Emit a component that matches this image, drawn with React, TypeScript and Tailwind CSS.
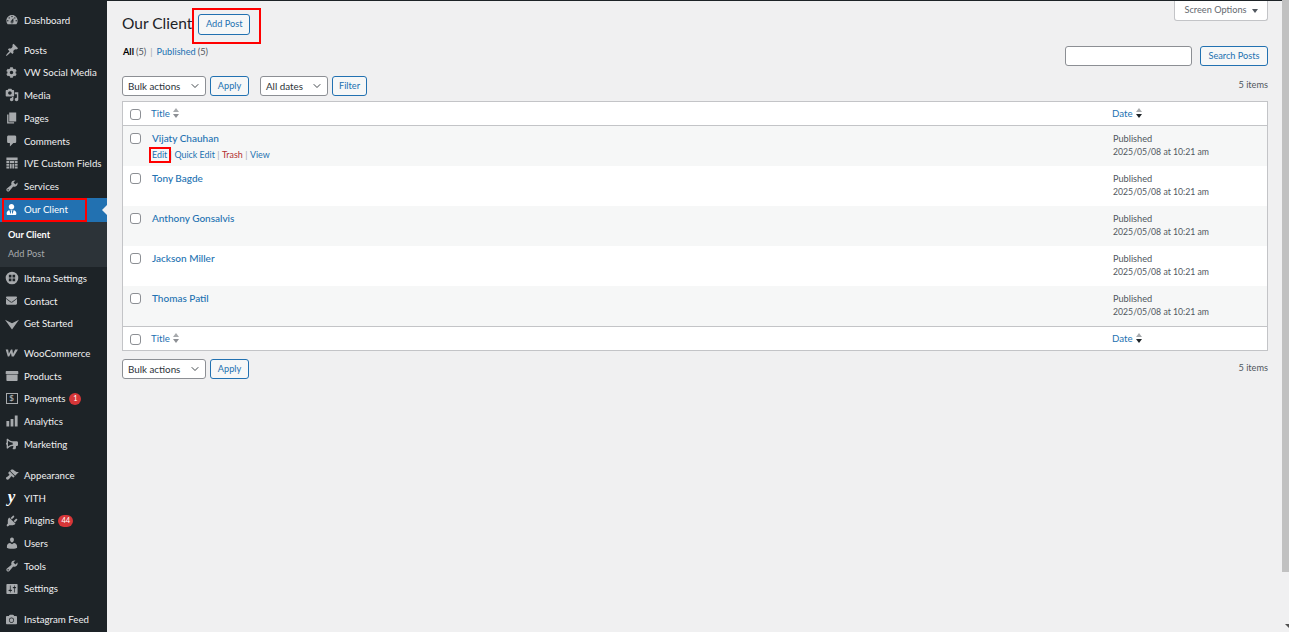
import React from "react";
import { ChevronDown } from "lucide-react";
import { FaCog, FaEnvelope, FaCamera, FaUserTie, FaBullhorn } from "react-icons/fa";

const font = "font-['Lato','Liberation_Sans',sans-serif]";

function D({ d, color = "#a7aaad", size = 14 }: { d: string; color?: string; size?: number }) {
  return (
    <svg width={size} height={size} viewBox="0 0 20 20" fill={color}>
      <path d={d} />
    </svg>
  );
}

const P = {
  dash: "M3.76 16h12.48c1.1-1.37 1.76-3.11 1.76-5 0-4.42-3.58-8-8-8s-8 3.58-8 8c0 1.89.66 3.63 1.76 5zM10 4c.55 0 1 .45 1 1s-.45 1-1 1-1-.45-1-1 .45-1 1-1zM6 6c.55 0 1 .45 1 1s-.45 1-1 1-1-.45-1-1 .45-1 1-1zm8 0c.55 0 1 .45 1 1s-.45 1-1 1-1-.45-1-1 .45-1 1-1zm-5.37 5.55L12 7v6c0 1.1-.9 2-2 2s-2-.9-2-2c0-.57.24-1.08.63-1.45zM4 10c.55 0 1 .45 1 1s-.45 1-1 1-1-.45-1-1 .45-1 1-1zm12 0c.55 0 1 .45 1 1s-.45 1-1 1-1-.45-1-1 .45-1 1-1zm-5 3c0-.55-.45-1-1-1s-1 .45-1 1 .45 1 1 1 1-.45 1-1z",
  pin: "M10.44 3.02l1.82-1.82 6.36 6.35-1.83 1.82c-1.05-.68-2.48-.57-3.41.36l-.75.75c-.92.93-1.04 2.35-.35 3.41l-1.83 1.82-2.41-2.41-2.8 2.79c-.42.42-3.38 2.71-3.8 2.29s1.86-3.39 2.28-3.81l2.79-2.79L4.1 9.36l1.83-1.82c1.05.69 2.48.57 3.4-.36l.75-.75c.93-.92 1.05-2.35.36-3.41z",
  media: "M13 11V4c0-.55-.45-1-1-1h-1.67L9 1H5L3.67 3H2c-.55 0-1 .45-1 1v7c0 .55.45 1 1 1h10c.55 0 1-.45 1-1zM7 4.5c1.38 0 2.5 1.12 2.5 2.5S8.38 9.5 7 9.5 4.5 8.38 4.5 7 5.62 4.5 7 4.5zM14 6h5v10.5c0 1.38-1.12 2.5-2.5 2.5S14 17.88 14 16.5s1.12-2.5 2.5-2.5c.17 0 .34.02.5.05V9h-3V6zm-4 8.05V13h2v3.5c0 1.38-1.12 2.5-2.5 2.5S7 17.88 7 16.5 8.12 14 9.5 14c.17 0 .34.02.5.05z",
  pages: "M6 15V2h10v13H6zm-1 1h8v2H3V5h2v11z",
  comment: "M5 2h9c1.1 0 2 .9 2 2v7c0 1.1-.9 2-2 2h-2l-5 5v-5H5c-1.1 0-2-.9-2-2V4c0-1.1.9-2 2-2z",
  wrench: "M16.68 9.77c-1.34 1.34-3.3 1.67-4.95.99l-5.41 6.52c-.99.99-2.59.99-3.58 0s-.99-2.59 0-3.57l6.52-5.42c-.68-1.65-.35-3.61.99-4.95 1.28-1.28 3.12-1.62 4.72-1.06l-2.89 2.89 2.82 2.82 2.86-2.87c.53 1.58.18 3.39-1.08 4.65zM3.81 16.21c.4.39 1.04.39 1.43 0 .4-.4.4-1.04 0-1.43-.39-.4-1.03-.4-1.43 0-.39.39-.39 1.03 0 1.43z",
  user: "M10 9.25c-2.27 0-2.73-3.44-2.73-3.44C7 4.02 7.82 2 9.97 2c2.16 0 2.98 2.02 2.71 3.81 0 0-.41 3.44-2.68 3.44zm0 2.57L12.72 10c2.39 0 4.52 2.33 4.52 4.53v2.49s-3.65 1.13-7.24 1.13c-3.65 0-7.24-1.13-7.24-1.13v-2.49c0-2.25 1.94-4.48 4.47-4.48z",
  brush: "M14.48 11.06L7.41 3.99l1.5-1.5c.5-.56 2.3-.47 3.51.32 1.21.8 1.43 1.28 2.91 2.1 1.18.64 2.45 1.26 4.45.85zm-.71.71L6.7 4.7 4.93 6.47c-.39.39-.39 1.02 0 1.41l1.06 1.06c.39.39.39 1.03 0 1.42-.6.6-1.43 1.11-2.21 1.69-.35.26-.7.53-1.01.84C1.43 13.23.91 14.8 2.09 15.98c1.17 1.18 2.75.65 4.08-.68.31-.31.58-.66.84-1.01.58-.78 1.09-1.61 1.69-2.21.39-.39 1.02-.39 1.41 0l1.06 1.06c.39.39 1.02.39 1.41 0z",
  plug: "M13.11 4.36L9.87 7.6 8 5.73l3.24-3.24c.35-.34 1.05-.2 1.56.32.52.51.66 1.21.31 1.55zm-8 1.77l.91-1.12 9.01 9.01-1.19.84c-.71.71-2.63 1.16-3.82 1.16H6.14L4.9 17.26c-.59.59-1.54.59-2.12 0-.59-.58-.59-1.53 0-2.12l1.24-1.24v-3.88c0-1.13.4-3.19 1.09-3.89zm7.26 3.97l3.24-3.24c.34-.35 1.04-.21 1.55.31.52.51.66 1.21.31 1.55l-3.24 3.25z",
  settings: "M18 16V4c0-.55-.45-1-1-1H3c-.55 0-1 .45-1 1v12c0 .55.45 1 1 1h14c.55 0 1-.45 1-1zM8 11h1c.55 0 1 .45 1 1s-.45 1-1 1H8v1.5c0 .28-.22.5-.5.5s-.5-.22-.5-.5V13H6c-.55 0-1-.45-1-1s.45-1 1-1h1V5.5c0-.28.22-.5.5-.5s.5.22.5.5V11zm5-2h-1c-.55 0-1-.45-1-1s.45-1 1-1h1V5.5c0-.28.22-.5.5-.5s.5.22.5.5V7h1c.55 0 1 .45 1 1s-.45 1-1 1h-1v5.5c0 .28-.22.5-.5.5s-.5-.22-.5-.5V9z",
  archive: "M19 4v3H1V4c0-.55.45-1 1-1h16c.55 0 1 .45 1 1zM2 8h16v8c0 .55-.45 1-1 1H3c-.55 0-1-.45-1-1V8z",
  chart: "M18 18V2h-4v16h4zm-6 0V7H8v11h4zm-6 0v-8H2v8h4z",
  table: "M2 2h16v4H2zM2 7h4v3H2zM7 7h6v3H7zM14 7h4v3h-4zM2 11h4v3H2zM7 11h2.5v7H7zM10.5 11H13v7h-2.5zM14 11h4v3h-4zM2 15h4v3H2zM14 15h4v3h-4z",
  ibtana: "M10 1a9 9 0 1 0 0 18 9 9 0 0 0 0-18zM5.5 5.5h3.7v3.7H5.5zM10.8 5.5h3.7v3.7h-3.7zM5.5 10.8h3.7v3.7H5.5zM10.8 10.8h3.7v3.7h-3.7z",
  start: "M0 4l10 5 10-5-10 14z",
  woo: "M1 5h3.500l1 6 3-6h2l1 6 3-6h4l-6 10h-3l-1-5-2.500 5H4z",
};

function Sort({ active }: { active?: boolean }) {
  return (
    <svg width="6" height="10" viewBox="0 0 6 10" className="ml-[3px] mt-[-1px]">
      <path d="M3 0 L6 4 H0 Z" fill="#a7aaad" />
      <path d="M3 10 L6 6 H0 Z" fill={active ? "#1d2327" : "#8c8f94"} />
    </svg>
  );
}

function Box() {
  return <span className="block w-[9px] h-[9px] box-content border border-[#8c8f94] rounded-[3px] bg-white" />;
}

function NavItem({ icon, label, gap, badge }: { icon: React.ReactNode; label: string; gap: number; badge?: string }) {
  return (
    <div className="flex items-center h-[22.7px] shrink-0" style={{ marginTop: gap }}>
      <span className="w-[24px] flex justify-center pr-[1px] text-[#a7aaad]">{icon}</span>
      <span className="text-[9.7px] text-[#f0f0f1] whitespace-nowrap">{label}</span>
      {badge && (
        <span className="ml-[4px] h-[12px] min-w-[12px] px-[3px] rounded-full bg-[#d63638] text-white text-[7.5px] leading-[12px] text-center">{badge}</span>
      )}
    </div>
  );
}

const rows = [
  { name: "Vijaty Chauhan", alt: true, actions: true },
  { name: "Tony Bagde", alt: false },
  { name: "Anthony Gonsalvis", alt: true },
  { name: "Jackson Miller", alt: false },
  { name: "Thomas Patil", alt: true },
];

function Select({ label, w }: { label: string; w: string }) {
  return (
    <div className={`${w} h-[20px] border border-[#8c8f94] rounded-[3px] bg-white flex items-center justify-between pl-[5px] pr-[4px] text-[9.8px] text-[#2c3338]`}>
      <span>{label}</span>
      <ChevronDown size={12} strokeWidth={1.8} />
    </div>
  );
}

function Btn({ label, className = "" }: { label: string; className?: string }) {
  return (
    <div className={`h-[20px] border border-[#2271b1] rounded-[3px] bg-[#f6f7f7] flex items-center justify-center text-[9.2px] text-[#2271b1] ${className}`}>{label}</div>
  );
}

function HeadRow({ top }: { top?: boolean }) {
  return (
    <div className={`flex items-center h-[24px] bg-white border-[#c3c4c7] ${top ? "border-b" : "border-t"}`}>
      <span className="ml-[7px] mr-[10px] mt-[1px]"><Box /></span>
      <span className="text-[9.7px] text-[#2271b1] mt-[-1px]">Title</span>
      <Sort />
      <span className="ml-auto w-[155px] flex items-center text-[9.7px] text-[#2271b1]">Date<Sort active /></span>
    </div>
  );
}

export default function App() {
  return (
    <div className={`${font} w-[1289px] h-[632px] flex bg-[#f0f0f1] overflow-hidden`}>
      <aside className="w-[107px] shrink-0 bg-[#1d2327] flex flex-col pt-[9px]">
        <NavItem gap={0} icon={<D d={P.dash} />} label="Dashboard" />
        <NavItem gap={7} icon={<D d={P.pin} />} label="Posts" />
        <NavItem gap={0} icon={<FaCog size={11} />} label="VW Social Media" />
        <NavItem gap={0} icon={<D d={P.media} />} label="Media" />
        <NavItem gap={0} icon={<D d={P.pages} />} label="Pages" />
        <NavItem gap={0} icon={<D d={P.comment} />} label="Comments" />
        <NavItem gap={0} icon={<D d={P.table} />} label="IVE Custom Fields" />
        <NavItem gap={0} icon={<D d={P.wrench} />} label="Services" />
        <div className="relative flex items-center h-[24.4px] bg-[#2271b1] shrink-0">
          <span className="w-[24px] flex justify-center pr-[1px] text-white"><FaUserTie size={11} /></span>
          <span className="text-[9.7px] text-white">Our Client</span>
          <span className="absolute left-[2px] top-0 w-[85px] h-[24px] border-2 border-[#ff0000]" />
          <span className="absolute right-0 top-[7px] border-y-[5px] border-y-transparent border-r-[5px] border-r-[#f0f0f1]" />
        </div>
        <div className="bg-[#2c3338] h-[45px] pt-[4px] shrink-0 flex flex-col">
          <div className="pl-[8px] h-[19px] flex items-center text-[9.2px] font-bold text-white">Our Client</div>
          <div className="pl-[8px] h-[19px] flex items-center text-[9.2px] text-[#a7aaad]">Add Post</div>
        </div>
        <NavItem gap={0} icon={<D d={P.ibtana} />} label="Ibtana Settings" />
        <NavItem gap={0} icon={<FaEnvelope size={11} />} label="Contact" />
        <NavItem gap={0} icon={<D d={P.start} />} label="Get Started" />
        <NavItem gap={7} icon={<D d={P.woo} />} label="WooCommerce" />
        <NavItem gap={0} icon={<D d={P.archive} />} label="Products" />
        <NavItem gap={0} icon={<span className="w-[12px] h-[11px] border border-[#a7aaad] text-[8px] leading-[9px] text-center font-bold">$</span>} label="Payments" badge="1" />
        <NavItem gap={0} icon={<D d={P.chart} />} label="Analytics" />
        <NavItem gap={0} icon={<FaBullhorn size={12} className="-scale-x-100" />} label="Marketing" />
        <NavItem gap={8.5} icon={<D d={P.brush} />} label="Appearance" />
        <NavItem gap={0} icon={<span className="text-[17px] leading-none font-bold italic text-white font-['Liberation_Serif',serif] mt-[-3px]">y</span>} label="YITH" />
        <NavItem gap={0} icon={<D d={P.plug} />} label="Plugins" badge="44" />
        <NavItem gap={0} icon={<D d={P.user} />} label="Users" />
        <NavItem gap={0} icon={<D d={P.wrench} />} label="Tools" />
        <NavItem gap={0} icon={<D d={P.settings} />} label="Settings" />
        <NavItem gap={8} icon={<FaCamera size={11} />} label="Instagram Feed" />
      </aside>

      <main className="relative flex-1 min-w-0 pl-[15px] pr-[14px] flex flex-col border-t border-t-[#1d2327] text-[#2c3338]">
        <div className="absolute right-[14px] top-0 w-[94px] h-[20px] bg-white border border-t-0 border-[#c3c4c7] rounded-b-[3px] flex items-center justify-center gap-[5px] text-[9.2px] text-[#646970]">
          <span className="mt-[-1px]">Screen Options</span>
          <span className="border-x-[3px] border-x-transparent border-t-[4px] border-t-[#50575e]" />
        </div>

        <div className="flex items-center h-[30px] mt-[8px]">
          <h1 className="text-[15.5px] leading-none text-[#1d2327]">Our Client</h1>
          <div className="relative ml-[6px]">
            <Btn label="Add Post" className="w-[52px] !h-[21px]" />
            <span className="absolute left-[-6px] top-[-6px] w-[69px] h-[36px] border-2 border-[#ff0000]" />
          </div>
        </div>

        <div className="flex items-start mt-[7px] h-[20px] text-[9.2px] ml-[1px]">
          <div className="flex items-center h-[12px]">
            <span className="font-bold text-black">All</span><span className="text-[#50575e] ml-[2px]">(5)</span>
            <span className="text-[#a7aaad] mx-[4px]">|</span>
            <span className="text-[#2271b1]">Published</span><span className="text-[#50575e] ml-[2px]">(5)</span>
          </div>
          <div className="ml-auto flex items-center gap-[8px]">
            <div className="w-[127px] h-[20px] bg-white border border-[#8c8f94] rounded-[3px]" />
            <Btn label="Search Posts" className="w-[68px]" />
          </div>
        </div>

        <div className="flex items-center mt-[10px] h-[20px]">
          <Select label="Bulk actions" w="w-[84px]" />
          <Btn label="Apply" className="w-[39px] ml-[4px]" />
          <span className="w-[11px]" />
          <Select label="All dates" w="w-[68px]" />
          <Btn label="Filter" className="w-[35px] ml-[4px]" />
          <span className="ml-auto text-[9.2px] text-[#50575e] mt-[-2px]">5 items</span>
        </div>

        <div className="mt-[5px] border border-[#c3c4c7] bg-white">
          <HeadRow top />
          {rows.map((r) => (
            <div key={r.name} className={`flex h-[40px] ${r.alt ? "bg-[#f6f7f7]" : "bg-white"}`}>
              <span className="ml-[7px] mr-[11px] mt-[7px]"><Box /></span>
              <div className="flex-1 pt-[6px]">
                <div className="text-[10px] leading-[12px] font-medium text-[#2271b1]">{r.name}</div>
                {r.actions && (
                  <div className="relative flex mt-[5px] text-[8.9px] leading-[12px] text-[#a7aaad]">
                    <span className="relative text-[#2271b1]">Edit<span className="absolute left-[-3px] top-[-2px] w-[22px] h-[16px] border-2 border-[#ff0000]" /></span>
                    <span className="mx-[2.5px]">|</span>
                    <span className="text-[#2271b1]">Quick Edit</span>
                    <span className="mx-[2.5px]">|</span>
                    <span className="text-[#b32d2e]">Trash</span>
                    <span className="mx-[2.5px]">|</span>
                    <span className="text-[#2271b1]">View</span>
                  </div>
                )}
              </div>
              <div className="w-[154px] pt-[6px] text-[9.2px] leading-[13px] text-[#50575e]">
                <div>Published</div>
                <div className="text-[8.7px]">2025/05/08 at 10:21 am</div>
              </div>
            </div>
          ))}
          <HeadRow />
        </div>

        <div className="flex items-center mt-[8px] h-[20px]">
          <Select label="Bulk actions" w="w-[84px]" />
          <Btn label="Apply" className="w-[39px] ml-[4px]" />
          <span className="ml-auto text-[9.2px] text-[#50575e] mt-[-3px]">5 items</span>
        </div>
      </main>

      <div className="w-[7px] shrink-0 bg-[#f0f0f1] flex flex-col">
        <div className="h-[572px] bg-[#c1c1c1]" />
        <span className="mt-auto mb-[4px] ml-[3px] w-0 h-0 border-x-[4px] border-x-transparent border-t-[4px] border-t-[#505050]" />
      </div>
    </div>
  );
}
